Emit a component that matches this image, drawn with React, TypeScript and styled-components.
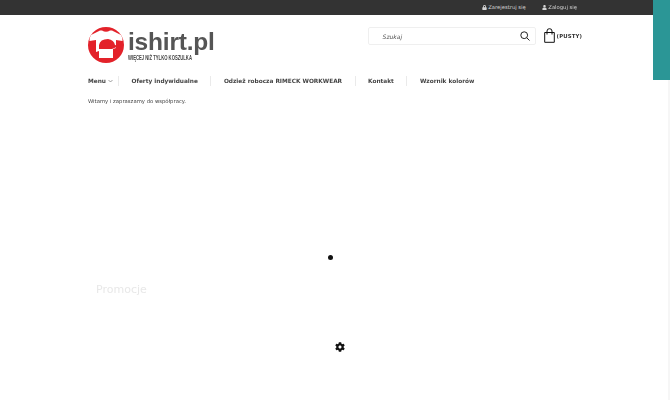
import { createGlobalStyle } from "styled-components";
import styled from "styled-components";
import { FaLock, FaUser, FaCog } from "react-icons/fa";

const GlobalStyle = createGlobalStyle`
  html, body {
    margin: 0;
    padding: 0;
    background: #fff;
    overflow: hidden;
  }
  body {
    font-family: "DejaVu Sans", sans-serif;
    color: #333;
  }
`;

const Page = styled.div`
  position: relative;
  width: 670px;
  height: 400px;
  overflow: hidden;
  filter: blur(0.25px);
`;

const TopBar = styled.div`
  height: 15px;
  background: #333333;
  display: flex;
  justify-content: flex-end;
  align-items: center;
  gap: 16px;
  padding-right: 93px;
`;

const TopLink = styled.a`
  display: flex;
  align-items: center;
  gap: 1.5px;
  color: #d4d4d4;
  font-size: 5.25px;
  line-height: 15px;
`;

const SideTab = styled.div`
  position: absolute;
  top: 0;
  right: 0;
  width: 17px;
  height: 80px;
  background: #2b9696;
`;

const ScrollEdge = styled.div`
  position: absolute;
  top: 80px;
  right: 0;
  bottom: 0;
  width: 2px;
  background: #f6f6f6;
`;

const Header = styled.div`
  display: flex;
  justify-content: space-between;
  padding: 12px 88px 0;
  height: 36px;
`;

const Logo = styled.div`
  display: flex;
  align-items: flex-start;
  gap: 4px;
`;

const LogoText = styled.div`
  display: flex;
  flex-direction: column;
  padding-top: 4px;
`;

const LogoName = styled.div`
  font-family: "Liberation Sans", sans-serif;
  font-weight: bold;
  font-size: 24.5px;
  line-height: 22px;
  letter-spacing: -0.2px;
  color: #555;
`;

const LogoTag = styled.div`
  font-family: "Liberation Sans", sans-serif;
  font-weight: bold;
  font-size: 7px;
  line-height: 8px;
  margin-top: 1px;
  color: #444;
  white-space: nowrap;
  transform: scaleX(0.6);
  transform-origin: left center;
`;

const Tools = styled.div`
  display: flex;
  align-items: flex-start;
  gap: 8px;
`;

const Search = styled.div`
  box-sizing: border-box;
  width: 168px;
  height: 18px;
  border: 1px solid #efefef;
  border-radius: 2px;
  display: flex;
  align-items: center;
  justify-content: space-between;
  padding: 0 5px 0 14px;
`;

const Placeholder = styled.span`
  font-size: 6px;
  font-style: italic;
  color: #555;
`;

const Cart = styled.div`
  display: flex;
  align-items: center;
  gap: 2px;
  font-size: 5.4px;
  font-weight: bold;
  color: #333;
  letter-spacing: 0.1px;
  margin-top: 1px;
`;

const Nav = styled.nav`
  display: flex;
  align-items: center;
  padding: 0 88px;
  height: 12px;
  margin-top: 12px;
`;

const NavItem = styled.a<{ $first?: boolean }>`
  font-size: 5.8px;
  font-weight: bold;
  color: #444;
  white-space: nowrap;
  line-height: 10px;
  padding: 0 ${(p) => (p.$first ? "5px" : "12.5px")} 0 ${(p) => (p.$first ? "0" : "12.5px")};
  border-right: 1px solid #eaeaea;
  display: flex;
  align-items: center;
  gap: 2px;
  &:last-child {
    border-right: none;
  }
`;

const Welcome = styled.p`
  margin: 10px 88px 0;
  font-size: 5.3px;
  line-height: 8px;
  color: #444;
`;

const Loader = styled.div`
  width: 5px;
  height: 5px;
  border-radius: 50%;
  background: #111;
  margin: 150px 0 0 328px;
`;

const SectionTitle = styled.h2`
  margin: 23px 96px 0;
  font-size: 11px;
  line-height: 14px;
  font-weight: normal;
  color: #e8e8e8;
`;

const GearRow = styled.div`
  display: flex;
  justify-content: center;
  margin: 45px 0 0 9px;
  color: #111;
`;

const App = () => (
  <Page>
    <GlobalStyle />
    <TopBar>
      <TopLink>
        <FaLock size={5} />
        Zarejestruj się
      </TopLink>
      <TopLink>
        <FaUser size={5} />
        Zaloguj się
      </TopLink>
    </TopBar>
    <SideTab />
    <ScrollEdge />
    <Header>
      <Logo>
        <svg width="36" height="36" viewBox="0 0 36 36">
          <circle cx="18" cy="18" r="18" fill="#e3222a" />
          <path
            d="M12 3.5 L14 3.5 Q18 6 22 3.5 L24 3.5 L33 8 Q35 11 34.5 14 L28 13 L28 31 L8 31 L8 13 L1.5 14 Q1 11 3 8 Z"
            fill="#fff"
          />
          <path d="M11 22 L11 18 Q12 12 20 12 Q26 13 27 18 L31 19 L24 22 Z" fill="#e3222a" />
          <path d="M11 24 L25 22.5 L25 31 L11 31 Z" fill="#fff" />
          <path d="M8 31 L8 25 L11 24 L11 31 Z M25 31 L25 22 L28 21 L28 31 Z" fill="#e3222a" />
        </svg>
        <LogoText>
          <LogoName>ishirt.pl</LogoName>
          <LogoTag>WIĘCEJ NIŻ TYLKO KOSZULKA</LogoTag>
        </LogoText>
      </Logo>
      <Tools>
        <Search>
          <Placeholder>Szukaj</Placeholder>
          <svg width="10" height="10" viewBox="0 0 10 10" fill="none" stroke="#222" strokeWidth="1">
            <circle cx="4.2" cy="4.2" r="3.4" />
            <path d="M6.7 6.7 L9.5 9.5" />
          </svg>
        </Search>
        <Cart>
          <svg width="11" height="15" viewBox="0 0 11 15" fill="none" stroke="#111" strokeWidth="1">
            <path d="M0.7 4.5 H10.3 V14.3 H0.7 Z" />
            <path d="M3 6.5 V3 Q3 0.7 5.5 0.7 Q8 0.7 8 3 V6.5" />
          </svg>
          (PUSTY)
        </Cart>
      </Tools>
    </Header>
    <Nav>
      <NavItem $first>
        Menu
        <svg width="5" height="4" viewBox="0 0 5 4" fill="none" stroke="#777" strokeWidth="0.7">
          <path d="M0.5 1 L2.5 3 L4.5 1" />
        </svg>
      </NavItem>
      <NavItem>Oferty indywidualne</NavItem>
      <NavItem>Odzież robocza RIMECK WORKWEAR</NavItem>
      <NavItem>Kontakt</NavItem>
      <NavItem>Wzornik kolorów</NavItem>
    </Nav>
    <Welcome>Witamy i zapraszamy do współpracy.</Welcome>
    <Loader />
    <SectionTitle>Promocje</SectionTitle>
    <GearRow>
      <FaCog size={10} />
    </GearRow>
  </Page>
);

export default App;
